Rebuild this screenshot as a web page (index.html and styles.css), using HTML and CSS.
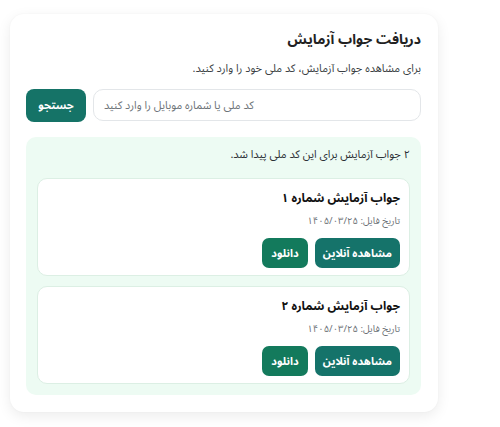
FILE: index.html
```html
<!DOCTYPE html>
<html lang="fa" dir="rtl">
<head>
<meta charset="utf-8">
<link rel="stylesheet" href="styles.css">
</head>
<body>
<div class="card">
  <h1 class="title">دریافت جواب آزمایش</h1>
  <p class="lead">برای مشاهده جواب آزمایش، کد ملی خود را وارد کنید.</p>
  <div class="search">
    <input class="field" type="text" placeholder="کد ملی یا شماره موبایل را وارد کنید">
    <button class="btn btn-search">جستجو</button>
  </div>
  <div class="results">
    <p class="count">۲ جواب آزمایش برای این کد ملی پیدا شد.</p>
    <div class="item">
      <div class="item-title">جواب آزمایش شماره ۱</div>
      <div class="item-date">تاریخ فایل: ۱۴۰۵/۰۳/۲۵</div>
      <div class="actions">
        <button class="btn btn-view">مشاهده آنلاین</button>
        <button class="btn btn-dl">دانلود</button>
      </div>
    </div>
    <div class="item">
      <div class="item-title">جواب آزمایش شماره ۲</div>
      <div class="item-date">تاریخ فایل: ۱۴۰۵/۰۳/۲۵</div>
      <div class="actions">
        <button class="btn btn-view">مشاهده آنلاین</button>
        <button class="btn btn-dl">دانلود</button>
      </div>
    </div>
  </div>
</div>
</body>
</html>
```

FILE: styles.css
```css
* { box-sizing: border-box; }
html, body { margin: 0; background: #ffffff; }
body {
  font-family: "Noto Sans Arabic", "Noto Sans", "DejaVu Sans", sans-serif;
  color: #1f2328;
  padding: 14px 62px 15px 10px;
}
.card {
  width: 428px;
  background: #fff;
  border-radius: 14px;
  box-shadow: 0 4px 14px rgba(0,0,0,0.08), 0 0 2px rgba(0,0,0,0.04);
  padding: 15px 17px 17px 16px;
}
.title {
  margin: 0;
  font-size: 14px;
  font-weight: 700;
  line-height: 22px;
  color: #222;
}
.lead {
  margin: 9px 0 0;
  font-size: 11px;
  line-height: 18px;
  color: #3b3f44;
}
.search {
  display: flex;
  gap: 7px;
  margin-top: 11px;
}
.field {
  flex: 1;
  height: 32px;
  border: 1px solid #e3e6e9;
  border-radius: 10px;
  padding: 0 10px;
  font-family: inherit;
  font-size: 11px;
  color: #333;
  background: #fff;
  direction: rtl;
  text-align: left;
}
.field::placeholder { color: #6d7378; }
.btn {
  border: 0;
  font-family: inherit;
  font-weight: 700;
  color: #fff;
  cursor: pointer;
}
.btn-search {
  width: 60px;
  height: 33px;
  border-radius: 8px;
  background: #157367;
  font-size: 11px;
}
.results {
  margin-top: 15px;
  background: #edfbf3;
  border-radius: 10px;
  padding: 9px 11px 11px;
}
.count {
  margin: 0 0 14px;
  font-size: 11px;
  line-height: 18px;
  color: #2c3035;
}
.item {
  background: #fff;
  border: 1px solid #dcefe4;
  border-radius: 10px;
  padding: 9px 9px 7px;
}
.item + .item { margin-top: 10px; }
.item-title {
  font-size: 12px;
  font-weight: 700;
  line-height: 22px;
  color: #111;
}
.item-date {
  margin-top: 1px;
  font-size: 9.5px;
  line-height: 20px;
  color: #6b7075;
}
.actions {
  display: flex;
  gap: 7px;
  margin-top: 7px;
}
.btn-view {
  height: 30px;
  padding: 0 8px;
  border-radius: 7px;
  background: #15736a;
  font-size: 11px;
}
.btn-dl {
  height: 30px;
  padding: 0 9px;
  border-radius: 7px;
  background: #137a5c;
  font-size: 11px;
}
```
